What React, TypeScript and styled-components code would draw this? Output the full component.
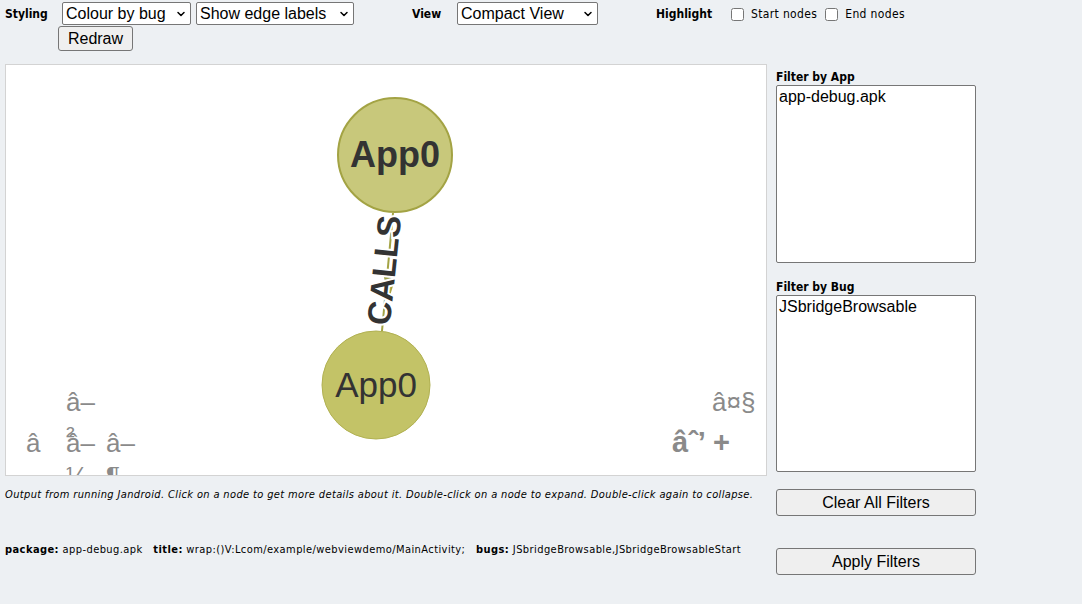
import React from "react";
import styled, { createGlobalStyle } from "styled-components";
import { ChevronDown } from "lucide-react";

const Global = createGlobalStyle`
  html, body { margin: 0; padding: 0; background: #edf0f3; }
  body { font-family: "DejaVu Sans Condensed", "DejaVu Sans", sans-serif; color: #000; }
  * { box-sizing: border-box; }
`;

const Page = styled.div`
  width: 1082px;
  height: 604px;
  padding: 2px 0 0 5px;
  overflow: hidden;
`;

const TopBar = styled.div`
  display: flex;
  align-items: flex-start;
  height: 62px;
`;

const Group = styled.div<{ $w?: number }>`
  display: flex;
  align-items: flex-start;
  width: ${(p) => (p.$w ? `${p.$w}px` : "auto")};
  flex-shrink: 0;
`;

const Label = styled.span<{ $w: number }>`
  width: ${(p) => p.$w}px;
  flex-shrink: 0;
  font-weight: bold;
  font-size: 12px;
  line-height: 15px;
  padding-top: 5px;
`;

const Controls = styled.div<{ $w: number }>`
  width: ${(p) => p.$w}px;
  display: flex;
  flex-wrap: wrap;
  column-gap: 5px;
  row-gap: 1px;
  padding-left: 4px;
`;

const SelectWrap = styled.div<{ $w: number }>`
  position: relative;
  width: ${(p) => p.$w}px;
  height: 23px;
`;

const NativeSelect = styled.select`
  appearance: none;
  -webkit-appearance: none;
  width: 100%;
  height: 100%;
  border: 1px solid #767676;
  border-radius: 2px;
  background: #fff;
  font-family: "Liberation Sans", Arial, sans-serif;
  font-size: 16px;
  color: #000;
  padding: 0 16px 0 3px;
  margin: 0;
`;

const Chevron = styled.span`
  position: absolute;
  right: 4px;
  top: 6px;
  pointer-events: none;
  display: flex;
  color: #000;
`;

const Button = styled.button<{ $w: number; $h: number }>`
  width: ${(p) => p.$w}px;
  height: ${(p) => p.$h}px;
  border: 1px solid #767676;
  border-radius: 3px;
  background: #efefef;
  font-family: "Liberation Sans", Arial, sans-serif;
  font-size: 16px;
  color: #000;
  padding: 0;
  margin: 0;
`;

const RedrawButton = styled(Button)`
  margin-left: -4px;
`;

const CheckLabel = styled.label`
  display: flex;
  align-items: center;
  font-size: 12px;
  line-height: 15px;
  letter-spacing: 0.35px;
  margin-right: 8px;
  padding-top: 5px;
  white-space: nowrap;
`;

const Check = styled.input`
  width: 13px;
  height: 13px;
  margin: 0 7px 0 0;
`;

const Main = styled.div`
  display: flex;
  align-items: flex-start;
  gap: 9px;
`;

const LeftCol = styled.div`
  width: 762px;
  display: flex;
  flex-direction: column;
`;

const Canvas = styled.div`
  position: relative;
  width: 762px;
  height: 412px;
  background: #fff;
  border: 1px solid #d3d3d3;
  overflow: hidden;
`;

const GraphSvg = styled.svg`
  display: block;
`;

const NavGlyph = styled.span<{ $bold?: boolean }>`
  position: absolute;
  font-family: "Liberation Sans", Arial, sans-serif;
  font-size: ${(p) => (p.$bold ? "29px" : "26px")};
  line-height: 33px;
  color: #8a8a8a;
  font-weight: ${(p) => (p.$bold ? "bold" : "normal")};
  white-space: nowrap;
`;

const Caption = styled.p`
  margin: 12px 0 0 0;
  font-size: 11px;
  line-height: 14px;
  letter-spacing: 0.36px;
  font-style: italic;
  white-space: nowrap;
`;

const Info = styled.p`
  margin: 41px 0 0 0;
  font-size: 11px;
  line-height: 14px;
  letter-spacing: 0.42px;
  white-space: nowrap;
`;

const RightCol = styled.div`
  width: 200px;
  display: flex;
  flex-direction: column;
  padding-top: 5px;
`;

const FilterLabel = styled.div`
  font-weight: bold;
  font-size: 12px;
  line-height: 15px;
  padding-top: 1px;
`;

const ListBox = styled.select`
  width: 200px;
  height: 178px;
  border: 1px solid #767676;
  border-radius: 2px;
  background: #fff;
  font-family: "Liberation Sans", Arial, sans-serif;
  font-size: 16px;
  padding: 0;
  margin: 0 0 16px 0;
  overflow: hidden;
  option { padding: 2px 2px 0; color: #000; }
`;

const ListBoxLast = styled(ListBox)`
  height: 177px;
  margin-bottom: 17px;
`;

const Spacer = styled.div<{ $h: number }>`
  height: ${(p) => p.$h}px;
`;

const Select = ({ w, value }: { w: number; value: string }) => (
  <SelectWrap $w={w}>
    <NativeSelect defaultValue={value}>
      <option>{value}</option>
    </NativeSelect>
    <Chevron>
      <ChevronDown size={12} strokeWidth={3} />
    </Chevron>
  </SelectWrap>
);

const Graph = () => (
  <GraphSvg width="760" height="410" viewBox="0 0 760 410">
    <line x1="376" y1="266" x2="387" y2="148" stroke="#a3a344" strokeWidth="2" />
    <polygon points="377,208 391,208 383,234" fill="#a3a344" />
    <text
      x="0"
      y="0"
      transform="translate(378 205) rotate(-84)"
      textAnchor="middle"
      dominantBaseline="central"
      fontFamily="Liberation Sans, Arial, sans-serif"
      fontWeight="bold"
      fontSize="33"
      fill="#333"
      stroke="#fff"
      strokeWidth="4"
      paintOrder="stroke"
    >
      CALLS
    </text>
    <circle cx="389" cy="90" r="57" fill="#c8c87b" stroke="#a3a344" strokeWidth="2" />
    <text
      x="389"
      y="102"
      textAnchor="middle"
      fontFamily="Liberation Sans, Arial, sans-serif"
      fontWeight="bold"
      fontSize="36"
      fill="#333"
    >
      App0
    </text>
    <circle cx="370" cy="320" r="54" fill="#c3c367" stroke="#b1b152" strokeWidth="1" />
    <text
      x="370"
      y="332"
      textAnchor="middle"
      fontFamily="Liberation Sans, Arial, sans-serif"
      fontSize="35"
      fill="#333"
    >
      App0
    </text>
  </GraphSvg>
);

export default function App() {
  return (
    <>
      <Global />
      <Page>
        <TopBar>
          <Group $w={407}>
            <Label $w={53}>Styling</Label>
            <Controls $w={354}>
              <Select w={129} value="Colour by bug" />
              <Select w={158} value="Show edge labels" />
              <RedrawButton $w={75} $h={25}>Redraw</RedrawButton>
            </Controls>
          </Group>
          <Group $w={244}>
            <Label $w={41}>View</Label>
            <Controls $w={200}>
              <Select w={141} value="Compact View" />
            </Controls>
          </Group>
          <Group>
            <Label $w={75}>Highlight</Label>
            <CheckLabel>
              <Check type="checkbox" />
              Start nodes
            </CheckLabel>
            <CheckLabel>
              <Check type="checkbox" />
              End nodes
            </CheckLabel>
          </Group>
        </TopBar>
        <Main>
          <LeftCol>
            <Canvas>
              <Graph />
              <NavGlyph style={{ left: 60, top: 321 }}>â–<br />²</NavGlyph>
              <NavGlyph style={{ left: 20, top: 362 }}>â</NavGlyph>
              <NavGlyph style={{ left: 60, top: 362 }}>â–<br />¼</NavGlyph>
              <NavGlyph style={{ left: 100, top: 362 }}>â–<br />¶</NavGlyph>
              <NavGlyph style={{ left: 706, top: 321 }}>â¤§</NavGlyph>
              <NavGlyph $bold style={{ left: 666, top: 361 }}>âˆ’</NavGlyph>
              <NavGlyph $bold style={{ left: 707, top: 361 }}>+</NavGlyph>
            </Canvas>
            <Caption>
              Output from running Jandroid. Click on a node to get more details about it. Double-click on a node to expand. Double-click again to collapse.
            </Caption>
            <Info>
              <b>package:</b> app-debug.apk&nbsp;&nbsp; <b>title:</b> wrap:()V:Lcom/example/webviewdemo/MainActivity;&nbsp;&nbsp; <b>bugs:</b> JSbridgeBrowsable,JSbridgeBrowsableStart
            </Info>
          </LeftCol>
          <RightCol>
            <FilterLabel>Filter by App</FilterLabel>
            <ListBox multiple size={8}>
              <option>app-debug.apk</option>
            </ListBox>
            <FilterLabel>Filter by Bug</FilterLabel>
            <ListBoxLast multiple size={8}>
              <option>JSbridgeBrowsable</option>
            </ListBoxLast>
            <Button $w={200} $h={27}>Clear All Filters</Button>
            <Spacer $h={32} />
            <Button $w={200} $h={27}>Apply Filters</Button>
          </RightCol>
        </Main>
      </Page>
    </>
  );
}
